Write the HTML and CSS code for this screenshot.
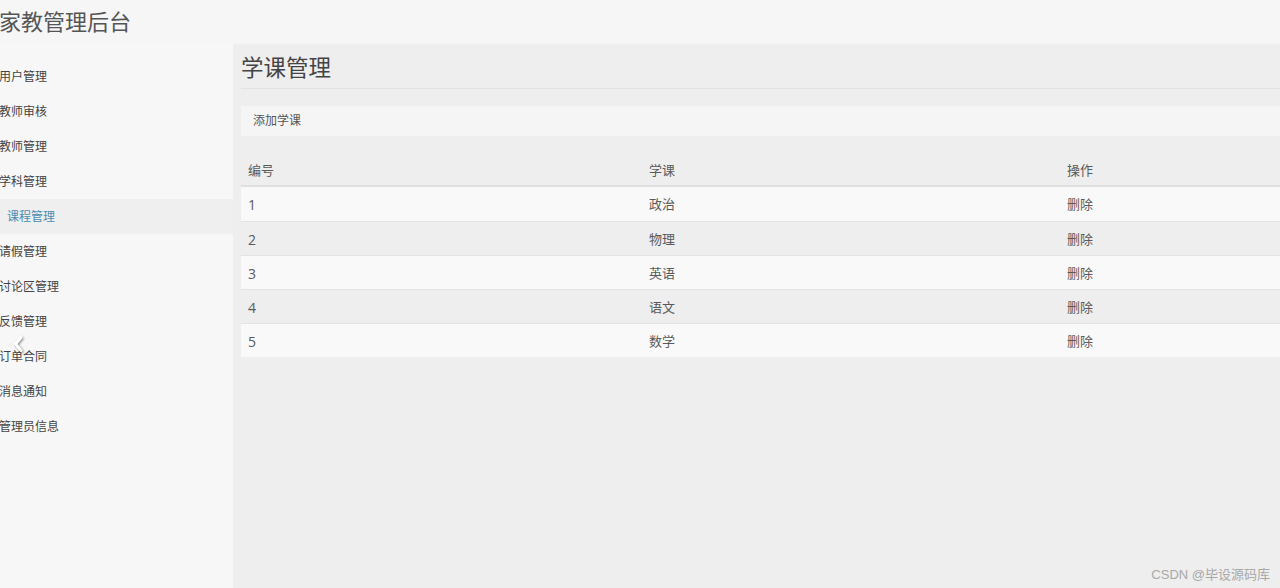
FILE: index.html
```html
<!DOCTYPE html>
<html lang="zh-CN">
<head>
    <meta charset="UTF-8">
    <title>家教管理后台</title>
    <link rel="stylesheet" href="styles.css">
</head>
<body>
    <div class="topbar">
        <h1 class="brand">家教管理后台</h1>
    </div>
    <div class="layout">
        <ul class="sidebar">
            <li>用户管理</li>
            <li>教师审核</li>
            <li>教师管理</li>
            <li>学科管理</li>
            <li class="active">课程管理</li>
            <li>请假管理</li>
            <li>讨论区管理</li>
            <li>反馈管理</li>
            <li>订单合同</li>
            <li>消息通知</li>
            <li>管理员信息</li>
        </ul>
        <div class="main">
            <h2 class="page-title">学课管理</h2>
            <div class="toolbar">添加学课</div>
            <div class="table">
                <div class="row head">
                    <span>编号</span><span>学课</span><span>操作</span>
                </div>
                <div class="row"><span class="num">1</span><span>政治</span><span>删除</span></div>
                <div class="row"><span class="num">2</span><span>物理</span><span>删除</span></div>
                <div class="row"><span class="num">3</span><span>英语</span><span>删除</span></div>
                <div class="row"><span class="num">4</span><span>语文</span><span>删除</span></div>
                <div class="row"><span class="num">5</span><span>数学</span><span>删除</span></div>
            </div>
        </div>
    </div>
    <!-- slide arrow left over the sidebar -->
    <svg class="arrow" width="12" height="18" viewBox="0 0 12 18">
        <path d="M9 2.5 L3.5 9 L9 15.5" fill="none" stroke="#ffffff" stroke-width="3" stroke-linecap="round" stroke-linejoin="round"/>
    </svg>
    <div class="watermark">CSDN @毕设源码库</div>
</body>
</html>
```

FILE: styles.css
```css
body {
    margin: 0;
    background: #f6f6f6;
    font-family: "Open Sans", "Noto Sans CJK SC", sans-serif;
    color: #555;
    height: 588px;
    overflow: hidden;
    position: relative;
}
.topbar {
    height: 43px;
}
.brand {
    margin: 0;
    padding: 5px 0 0 0;
    margin-left: -1px;
    font-size: 22px;
    font-weight: normal;
    line-height: 32px;
    color: #555;
}
.layout {
    display: flex;
    height: 545px;
}
.sidebar {
    list-style: none;
    margin: 0;
    padding: 16px 0 0 0;
    width: 233px;
    background: #f7f7f7;
}
.sidebar li {
    height: 35px;
    line-height: 35px;
    font-size: 12px;
    color: #444;
    margin-left: -1px;
}
.sidebar li.active {
    background: #efefef;
    color: #4a8db0;
    padding-left: 8px;
}
.main {
    flex: 1;
    background: #eeeeee;
    border-top: 1px solid #f4f4f4;
    padding: 0 0 0 8px;
}
.page-title {
    margin: 0;
    font-size: 22.5px;
    font-weight: normal;
    color: #444;
    height: 44px;
    line-height: 48px;
    border-bottom: 1px solid #e2e2e2;
}
.toolbar {
    margin-top: 17px;
    height: 30px;
    line-height: 30px;
    padding-left: 12px;
    background: #f5f5f5;
    font-size: 12px;
    color: #555;
}
.table {
    margin-top: 17px;
    font-size: 13px;
    color: #5a5a5a;
}
.row {
    display: grid;
    grid-template-columns: 401px 418px 1fr;
    height: 33px;
    line-height: 35px;
    border-top: 1px solid #e3e3e3;
}
.row span {
    padding-left: 7px;
}
.row .num {
    font-size: 14px;
}
.row.head {
    border-top: none;
    height: 32px;
    line-height: 34px;
    border-bottom: 2px solid #dfdfdf;
}
.row.head + .row {
    border-top: none;
    height: 34px;
}
.row:nth-child(even) {
    background: #f9f9f9;
}
.arrow {
    position: absolute;
    left: 12px;
    top: 335px;
    filter: drop-shadow(1px 1px 1px rgba(0, 0, 0, 0.45));
}
.watermark {
    position: absolute;
    right: 10px;
    bottom: 5px;
    font-size: 13px;
    color: #a8a8a8;
    font-family: "Liberation Sans", "Noto Sans CJK SC", sans-serif;
}
```
